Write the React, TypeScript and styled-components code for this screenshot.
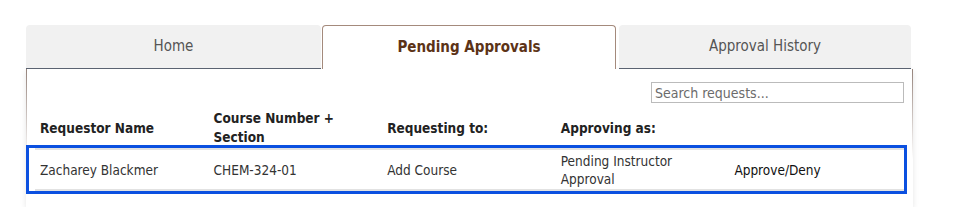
import styled, { createGlobalStyle } from 'styled-components'

type Request = {
	name: string
	course: string
	requesting: string
	approving: string
}

const requests: Request[] = [
	{
		name: 'Zacharey Blackmer',
		course: 'CHEM-324-01',
		requesting: 'Add Course',
		approving: 'Pending Instructor Approval',
	},
]

const tabs = ['Home', 'Pending Approvals', 'Approval History']

export default function App() {
	return (
		<>
			<GlobalStyle />
			<Page>
				<TabBar>
					{tabs.map((t) => (
						<Tab key={t} $active={t === 'Pending Approvals'}>
							{t}
						</Tab>
					))}
				</TabBar>
				<Panel>
					<SearchRow>
						<SearchInput placeholder="Search requests..." />
					</SearchRow>
					<HeaderRow>
						<HeadCell>Requestor Name</HeadCell>
						<HeadCell>Course Number + Section</HeadCell>
						<HeadCell>Requesting to:</HeadCell>
						<HeadCell>Approving as:</HeadCell>
						<HeadCell />
					</HeaderRow>
					{requests.map((r) => (
						<SelectedRow key={r.name}>
							<RowGrid>
								<Cell>{r.name}</Cell>
								<Cell>{r.course}</Cell>
								<Cell>{r.requesting}</Cell>
								<Cell>{r.approving}</Cell>
								<ActionCell>Approve/Deny</ActionCell>
							</RowGrid>
						</SelectedRow>
					))}
				</Panel>
			</Page>
		</>
	)
}

const GlobalStyle = createGlobalStyle`
	body {
		margin: 0;
		background: #fff;
		font-family: "DejaVu Sans Condensed", "DejaVu Sans", sans-serif;
	}
`

const Page = styled.div`
	padding: 25px 47px 0 26px;
	width: 887px;
`

const TabBar = styled.div`
	display: flex;
	gap: 1px;
	height: 44px;
	padding-right: 2px;
`

const Tab = styled.div<{ $active?: boolean }>`
	flex: 1;
	display: flex;
	align-items: center;
	justify-content: center;
	font-size: 15px;
	border-radius: 4px 4px 0 0;
	box-sizing: border-box;
	background: ${(p) => (p.$active ? '#fff' : '#f1f1f1')};
	color: ${(p) => (p.$active ? '#5c3317' : '#555')};
	font-weight: ${(p) => (p.$active ? 'bold' : 'normal')};
	border: ${(p) => (p.$active ? '1px solid #a48a7c' : 'none')};
	border-bottom: ${(p) => (p.$active ? 'none' : '1px solid #5b6371')};
	padding-bottom: 2px;

	&:first-child {
		flex: 0 0 295px;
	}

	&:last-child {
		margin-left: 2px;
	}
`

const Panel = styled.div`
	background: #fff;
	box-sizing: border-box;
	border-left: 1px solid;
	border-right: 1px solid;
	border-image: linear-gradient(to bottom, #94827a, rgba(148, 130, 122, 0) 65%) 1;
	box-shadow: 0 2px 6px rgba(0, 0, 0, 0.1);
	padding: 13px 0 13px;
`

const SearchRow = styled.div`
	display: flex;
	justify-content: flex-end;
	padding-right: 8px;
`

const SearchInput = styled.input`
	width: 253px;
	height: 21px;
	box-sizing: border-box;
	border: 1px solid #bbb;
	padding: 0 3px;
	font-family: inherit;
	font-size: 14px;
	color: #333;
	outline: none;

	&::placeholder {
		color: #6b6b6b;
	}
`

const HeaderRow = styled.div`
	display: grid;
	grid-template-columns: repeat(5, 173.6px);
	padding-left: 8px;
	margin-top: 6px;
	height: 36px;
	align-items: center;
`

const HeadCell = styled.div`
	padding: 0 30px 0 5px;
	font-size: 13.5px;
	font-weight: bold;
	color: #222;
	line-height: 19px;
`

const SelectedRow = styled.div`
	border: 3px solid #0b50e0;
	margin: 0 5px 0 -1px;
	padding: 0 0 0 6px;
`

const RowGrid = styled.div`
	display: grid;
	grid-template-columns: repeat(5, 173.6px);
	align-items: center;
	border-top: 2px solid #e2e2e2;
	border-bottom: 2px solid #e2e2e2;
	height: 43px;
	box-sizing: border-box;
`

const Cell = styled.div`
	padding: 0 30px 0 5px;
	font-size: 13.5px;
	color: #333;
	line-height: 18px;
`

const ActionCell = styled(Cell)`
	color: #111;
`
